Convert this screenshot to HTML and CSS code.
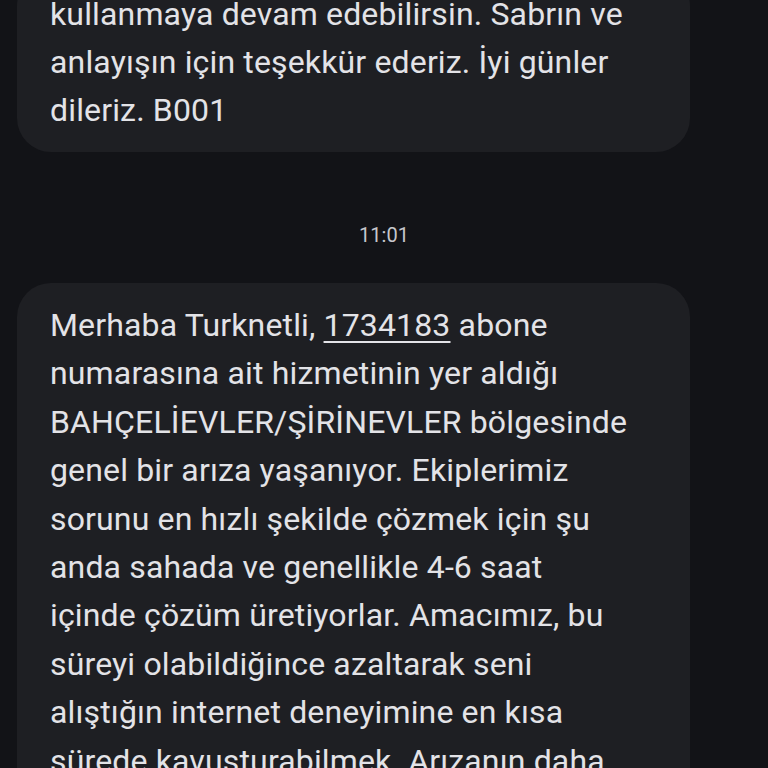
FILE: index.html
```html
<!DOCTYPE html>
<html lang="tr">
<head>
<meta charset="utf-8">
<link rel="stylesheet" href="styles.css">
</head>
<body>
<main class="thread">
  <div class="bubble bubble-first">
    <span class="line">kullanmaya devam edebilirsin. Sabrın ve</span>
    <span class="line">anlayışın için teşekkür ederiz. İyi günler</span>
    <span class="line">dileriz. B001</span>
  </div>
  <div class="time">11:01</div>
  <div class="bubble bubble-second">
    <span class="line">Merhaba Turknetli, <span class="num">1734183</span> abone</span>
    <span class="line">numarasına ait hizmetinin yer aldığı</span>
    <span class="line">BAHÇELİEVLER/ŞİRİNEVLER bölgesinde</span>
    <span class="line">genel bir arıza yaşanıyor. Ekiplerimiz</span>
    <span class="line">sorunu en hızlı şekilde çözmek için şu</span>
    <span class="line">anda sahada ve genellikle 4-6 saat</span>
    <span class="line">içinde çözüm üretiyorlar. Amacımız, bu</span>
    <span class="line">süreyi olabildiğince azaltarak seni</span>
    <span class="line">alıştığın internet deneyimine en kısa</span>
    <span class="line">sürede kavuşturabilmek. Arızanın daha</span>
    <span class="line">hızlı giderilmesi için çalışıyoruz.</span>
  </div>
</main>
</body>
</html>
```

FILE: styles.css
```css
html, body {
  margin: 0;
  padding: 0;
  background: #121317;
  overflow: hidden;
}

.thread {
  margin-top: -28px;
  font-family: Roboto, "Noto Sans", sans-serif;
  color: #e3e3e7;
}

.bubble {
  margin-left: 17px;
  width: 673px;
  box-sizing: border-box;
  background: #1e1f23;
  border-radius: 34px;
  padding: 18px 20px 18px 33px;
  font-size: 32px;
  letter-spacing: 0.15px;
  line-height: 48.4px;
}

.bubble-first {
  line-height: 48px;
}

.line {
  display: block;
  white-space: nowrap;
}

.num {
  text-decoration: underline;
  text-decoration-thickness: 2px;
  text-underline-offset: 5px;
}

.time {
  margin: 71px 0 36px;
  text-align: center;
  font-size: 20px;
  line-height: 24px;
  color: #c6c7cc;
}
```
